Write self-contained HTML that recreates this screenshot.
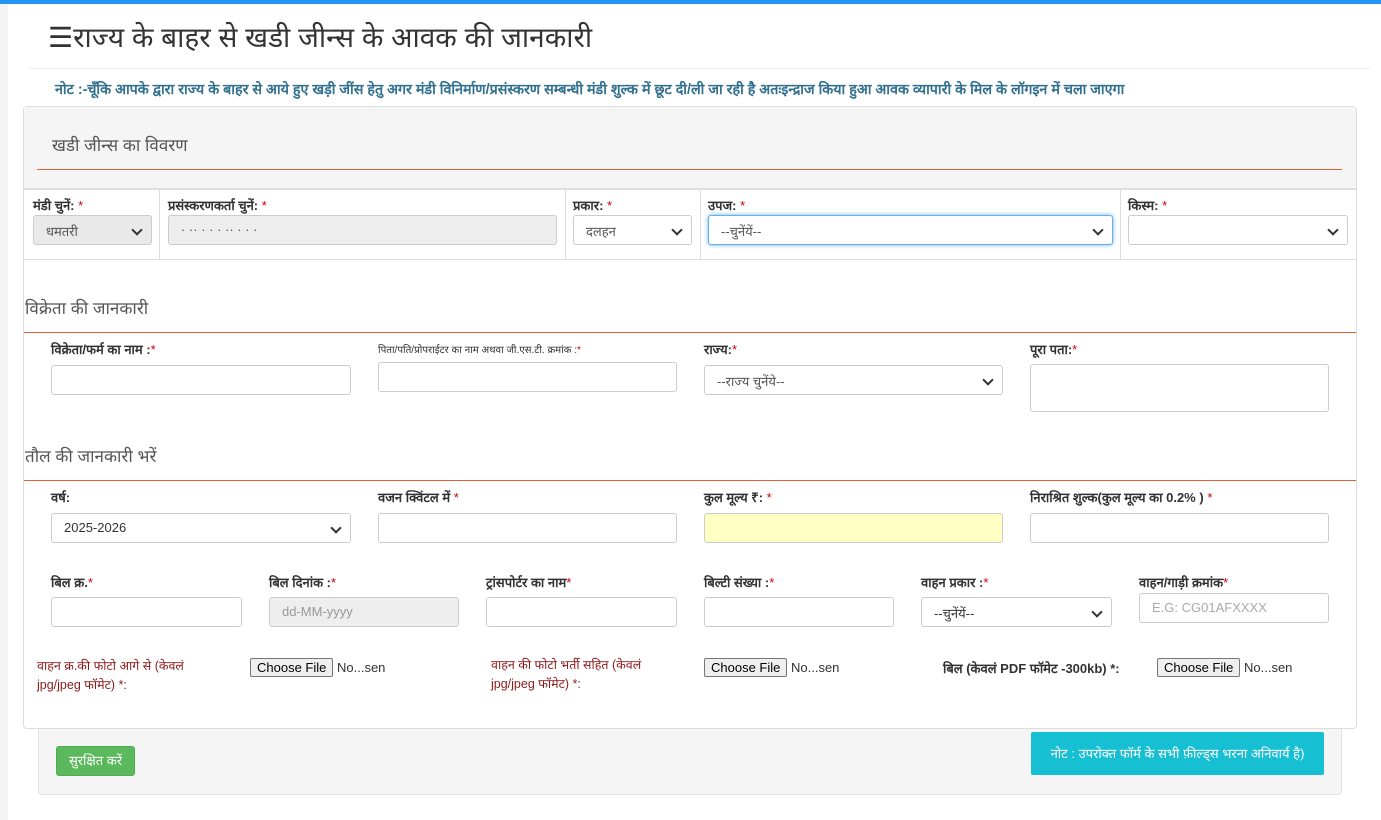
<!DOCTYPE html>
<html><head><meta charset="utf-8"><style>
*{box-sizing:border-box;margin:0;padding:0}
body{width:1381px;height:820px;background:#fff;font-family:"Liberation Sans","Noto Sans CJK SC",sans-serif;color:#333;position:relative;overflow:hidden;font-size:13px}
.a{position:absolute}
.inp{position:absolute;height:30px;border:1px solid #ccc;border-radius:3px;background:#fff;font-size:13px;padding:6px 12px;color:#555}
.sel:after{content:"";position:absolute;right:10px;top:10px;width:6px;height:6px;border-right:2px solid #333;border-bottom:2px solid #333;transform:rotate(45deg)}
.lbl{position:absolute;font-weight:bold;font-size:13px;color:#333}
.lbl i{color:#c00;font-style:normal;font-weight:normal}
.sec{position:absolute;font-size:17px;color:#555}
.line{position:absolute;height:1px;background:#e0603a}
.fl{position:absolute;font-size:12.5px;color:#8b1a1a;line-height:19px}
.fb{position:absolute;font-size:13px;color:#333}
.fb span{display:inline-block;border:1px solid #767676;background:#efefef;border-radius:2px;padding:1px 6px;color:#000}
</style></head><body>
<div class="a" style="left:0;top:0;width:1381px;height:4px;background:#2196f3"></div>
<div class="a" style="left:0;top:4px;width:8px;height:816px;background:#f4f4f4"></div>
<div class="a" style="left:48px;top:18px;font-size:28px;color:#333">&#9776;राज्य के बाहर से खडी जीन्स के आवक की जानकारी</div>
<div class="a" style="left:28px;top:68px;width:1342px;height:1px;background:#eee"></div>
<div class="a" style="left:55px;top:80px;font-size:14.3px;font-weight:bold;color:#31708f;white-space:nowrap">नोट :-चूँकि आपके द्वारा राज्य के बाहर से आये हुए खड़ी जींस हेतु अगर मंडी विनिर्माण/प्रसंस्करण सम्बन्धी मंडी शुल्क में छूट दी/ली जा रही है अतःइन्द्राज किया हुआ आवक व्यापारी के मिल के लॉगइन में चला जाएगा</div>
<div class="a" style="left:23px;top:106px;width:1334px;height:623px;border:1px solid #ddd;border-radius:4px;background:#fff"></div>
<div class="a" style="left:24px;top:107px;width:1332px;height:82px;background:#f5f5f5"></div>
<div class="sec" style="left:52px;top:133px">खडी जीन्स का विवरण</div>
<div class="line" style="left:37px;top:169px;width:1305px"></div>
<div class="a" style="left:24px;top:188px;width:1332px;height:72px;border-top:2px solid #ddd;border-bottom:1px solid #ddd;background:#fff"></div>
<div class="a" style="left:159px;top:190px;width:1px;height:70px;background:#ddd"></div>
<div class="a" style="left:565px;top:190px;width:1px;height:70px;background:#ddd"></div>
<div class="a" style="left:700px;top:190px;width:1px;height:70px;background:#ddd"></div>
<div class="a" style="left:1120px;top:190px;width:1px;height:70px;background:#ddd"></div>
<div class="lbl" style="left:33px;top:196px">मंडी चुनें: <i>*</i></div>
<div class="lbl" style="left:168px;top:196px">प्रसंस्करणकर्ता चुनें: <i>*</i></div>
<div class="lbl" style="left:573px;top:196px">प्रकार: <i>*</i></div>
<div class="lbl" style="left:708px;top:196px">उपज: <i>*</i></div>
<div class="lbl" style="left:1128px;top:196px">किस्म: <i>*</i></div>
<div class="inp sel" style="left:33px;top:215px;width:119px;background:#e9e9e9">धमतरी</div>
<div class="inp" style="left:168px;top:215px;width:389px;background:#eee">· ·· · · · ·· · · ·</div>
<div class="inp sel" style="left:573px;top:215px;width:119px">दलहन</div>
<div class="inp sel" style="left:708px;top:215px;width:405px;border:1px solid #66afe9;box-shadow:0 0 4px #66afe9">--चुनेंयें--</div>
<div class="inp sel" style="left:1128px;top:215px;width:220px"></div>
<div class="sec" style="left:25px;top:296px">विक्रेता की जानकारी</div>
<div class="line" style="left:24px;top:332px;width:1332px"></div>
<div class="lbl" style="left:51px;top:340px">विक्रेता/फर्म का नाम :<i>*</i></div>
<div class="lbl" style="left:378px;top:342px;font-size:10px;font-weight:normal">पिता/पति/प्रोपराईटर का नाम अथवा जी.एस.टी. क्रमांक :<i>*</i></div>
<div class="lbl" style="left:704px;top:340px">राज्य:<i>*</i></div>
<div class="lbl" style="left:1030px;top:340px">पूरा पता:<i>*</i></div>
<div class="inp" style="left:51px;top:365px;width:300px"></div>
<div class="inp" style="left:378px;top:362px;width:299px"></div>
<div class="inp sel" style="left:704px;top:365px;width:299px">--राज्य चुनेंये--</div>
<div class="inp" style="left:1030px;top:364px;width:299px;height:48px"></div>
<div class="sec" style="left:25px;top:444px">तौल की जानकारी भरें</div>
<div class="line" style="left:24px;top:480px;width:1332px"></div>
<div class="lbl" style="left:51px;top:488px">वर्ष:</div>
<div class="lbl" style="left:378px;top:488px">वजन क्विंटल में <i>*</i></div>
<div class="lbl" style="left:704px;top:488px">कुल मूल्य ₹: <i>*</i></div>
<div class="lbl" style="left:1030px;top:488px">निराश्रित शुल्क(कुल मूल्य का 0.2% ) <i>*</i></div>
<div class="inp sel" style="left:51px;top:513px;width:300px;color:#333">2025-2026</div>
<div class="inp" style="left:378px;top:513px;width:299px"></div>
<div class="inp" style="left:704px;top:513px;width:299px;background:#ffffc4"></div>
<div class="inp" style="left:1030px;top:513px;width:299px"></div>
<div class="lbl" style="left:51px;top:573px">बिल क्र.<i>*</i></div>
<div class="lbl" style="left:269px;top:573px">बिल दिनांक :<i>*</i></div>
<div class="lbl" style="left:486px;top:573px">ट्रांसपोर्टर का नाम<i>*</i></div>
<div class="lbl" style="left:704px;top:573px">बिल्टी संख्या :<i>*</i></div>
<div class="lbl" style="left:921px;top:573px">वाहन प्रकार :<i>*</i></div>
<div class="lbl" style="left:1139px;top:573px">वाहन/गाड़ी क्रमांक<i>*</i></div>
<div class="inp" style="left:51px;top:597px;width:191px"></div>
<div class="inp" style="left:269px;top:597px;width:190px;background:#eee;color:#999">dd-MM-yyyy</div>
<div class="inp" style="left:486px;top:597px;width:191px"></div>
<div class="inp" style="left:704px;top:597px;width:190px"></div>
<div class="inp sel" style="left:921px;top:597px;width:191px;color:#333">--चुनेंयें--</div>
<div class="inp" style="left:1139px;top:593px;width:190px;color:#aaa">E.G: CG01AFXXXX</div>
<div class="fl" style="left:37px;top:657px">वाहन क्र.की फोटो आगे से (केवलं<br>jpg/jpeg फॉमेट) *:</div>
<div class="fb" style="left:250px;top:658px"><span>Choose File</span> No...sen</div>
<div class="fl" style="left:491px;top:656px">वाहन की फोटो भर्ती सहित (केवलं<br>jpg/jpeg फॉमेट) *:</div>
<div class="fb" style="left:704px;top:658px"><span>Choose File</span> No...sen</div>
<div class="lbl" style="left:943px;top:659px">बिल (केवलं PDF फॉमेट -300kb) *:</div>
<div class="fb" style="left:1157px;top:658px"><span>Choose File</span> No...sen</div>
<div class="a" style="left:38px;top:729px;width:1304px;height:66px;background:#f5f5f5;border:1px solid #e3e3e3;border-top:none;border-radius:0 0 4px 4px"></div>
<div class="a" style="left:56px;top:746px;width:79px;height:30px;background:#5cb85c;border:1px solid #4cae4c;border-radius:3px;color:#fff;font-size:13px;text-align:center;line-height:28px">सुरक्षित करें</div>
<div class="a" style="left:1031px;top:732px;width:293px;height:43px;background:#17bfd3;border-radius:2px;color:#fff;font-size:13px;text-align:center;line-height:43px">नोट : उपरोक्त फॉर्म के सभी फ़ील्ड्स भरना अनिवार्य है)</div>
</body></html>
